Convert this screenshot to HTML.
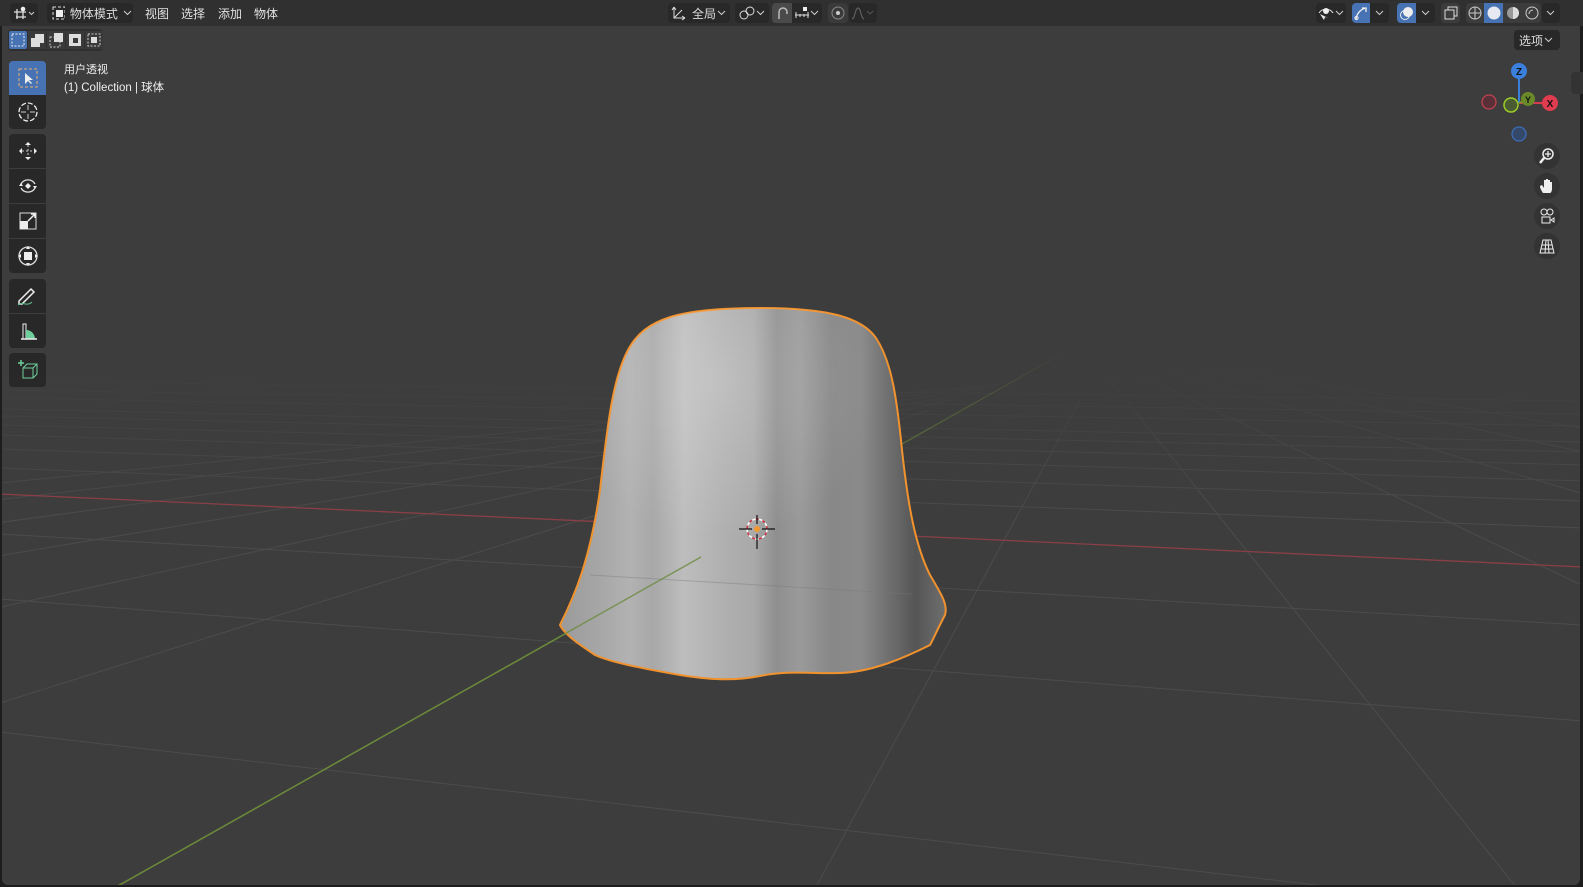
<!DOCTYPE html>
<html><head><meta charset="utf-8"><style>
*{margin:0;padding:0;box-sizing:border-box}
body{width:1583px;height:887px;background:#1d1d1d;font-family:"Liberation Sans","Noto Sans CJK SC",sans-serif;color:#ddd;overflow:hidden;position:relative;font-size:12px}
.top{position:absolute;left:0;top:0;width:1583px;height:26px;background:#303030}
.btn{position:absolute;top:3px;height:20px;background:#282828;border-radius:4px;display:flex;align-items:center;justify-content:center;color:#ddd;font-size:12px;white-space:nowrap}
.menu{position:absolute;top:5px;font-size:12px;color:#e0e0e0;white-space:nowrap}
.vp{position:absolute;left:2px;top:26px;width:1578px;height:859px;background:#3d3d3d;border-radius:0 0 6px 6px;overflow:hidden}
.tool{position:absolute;left:9px;width:37px;height:34px;background:#282828;display:flex;align-items:center;justify-content:center}
.blue{background:#4772b3}
.circ{position:absolute;width:26px;height:26px;border-radius:13px;background:#333;display:flex;align-items:center;justify-content:center}
</style></head><body>
<div class="top"></div>
<div class="btn" style="left:10px;width:28px"><svg width="24" height="14" viewBox="0 0 24 14"><path d="M2 6h12M4 11h10M5 3v10M11 3v10" stroke="#ddd" fill="none" stroke-width="1.3"/><circle cx="11" cy="3" r="2.3" fill="#eee"/><path d="M17 6l2.5 2.5L22 6" stroke="#ccc" fill="none"/></svg></div>
<div class="btn" style="left:47px;width:86px;justify-content:flex-start;padding-left:4px"><svg width="16" height="14"><rect x="2" y="1" width="12" height="12" fill="none" stroke="#ddd" stroke-dasharray="3 2"/><rect x="5" y="4" width="7" height="7" fill="#eee"/></svg><span style="margin-left:5px">物体模式</span><svg width="14" height="10" style="margin-left:3px"><path d="M3 3l3.5 3.5L10 3" stroke="#ccc" fill="none"/></svg></div>
<div class="menu" style="left:145px">视图</div>
<div class="menu" style="left:181px">选择</div>
<div class="menu" style="left:218px">添加</div>
<div class="menu" style="left:254px">物体</div>
<div class="btn" style="left:668px;width:62px"><svg width="18" height="16"><path d="M4 2v11h11M4 13l8-8M4 2l-2 3M4 2l2 3M15 13l-3-2M15 13l-3 2" stroke="#ddd" fill="none"/></svg><span style="margin-left:4px">全局</span><svg width="12" height="10"><path d="M2 3l3.5 3.5L9 3" stroke="#ccc" fill="none"/></svg></div>
<div class="btn" style="left:735px;width:34px"><svg width="18" height="16"><circle cx="6" cy="10" r="4" fill="none" stroke="#ddd"/><circle cx="12" cy="6" r="4" fill="none" stroke="#ddd"/></svg><svg width="10" height="10"><path d="M1 3l3.5 3.5L8 3" stroke="#ccc" fill="none"/></svg></div>
<div class="btn" style="left:772px;width:20px;background:#4a4a4a;border-radius:4px 0 0 4px"><svg width="16" height="16"><path d="M5 14V7a4 4 0 018 0v2" stroke="#bbb" fill="none" stroke-width="1.5"/></svg></div>
<div class="btn" style="left:792px;width:30px;border-radius:0 4px 4px 0"><svg width="16" height="14"><path d="M1 9h14M2 6v6M14 6v6M6 8v3M10 8v3" stroke="#ddd" fill="none"/><rect x="9" y="1" width="4" height="4" fill="#eee"/></svg><svg width="10" height="10"><path d="M1 3l3.5 3.5L8 3" stroke="#ccc" fill="none"/></svg></div>
<div class="btn" style="left:828px;width:20px;background:#3a3a3a"><svg width="16" height="16"><circle cx="8" cy="8" r="6" fill="none" stroke="#888"/><circle cx="8" cy="8" r="2" fill="#ccc"/></svg></div>
<div class="btn" style="left:849px;width:28px"><svg width="26" height="14"><path d="M2 13C5 13 5 2 8 2s3 11 6 11" stroke="#666" fill="none"/><path d="M17 5l3 3 3-3" stroke="#555" fill="none"/></svg></div>
<div class="btn" style="left:1316px;width:30px"><svg width="18" height="16"><path d="M2 8c3-5 11-5 14 0" stroke="#ddd" fill="none"/><circle cx="9" cy="6" r="3" fill="#eee"/><path d="M3 9l4 6 1-3 3 1z" fill="#eee"/></svg><svg width="10" height="10"><path d="M1 3l3.5 3.5L8 3" stroke="#ccc" fill="none"/></svg></div>
<div class="btn" style="left:1352px;width:18px;background:#4772b3;border-radius:4px 0 0 4px"><svg width="16" height="16"><path d="M3 14C4 8 8 4 13 3M9 3h4v4" stroke="#eee" fill="none" stroke-width="1.3"/><circle cx="3.5" cy="13" r="1.6" fill="none" stroke="#eee"/></svg></div>
<div class="btn" style="left:1370px;width:19px;border-radius:0 4px 4px 0"><svg width="10" height="10"><path d="M1 3l3.5 3.5L8 3" stroke="#ccc" fill="none"/></svg></div>
<div class="btn" style="left:1397px;width:19px;background:#4772b3;border-radius:4px 0 0 4px"><svg width="16" height="16"><circle cx="9" cy="7" r="5" fill="#eee"/><circle cx="6" cy="10" r="4.5" fill="none" stroke="#eee"/></svg></div>
<div class="btn" style="left:1416px;width:19px;border-radius:0 4px 4px 0"><svg width="10" height="10"><path d="M1 3l3.5 3.5L8 3" stroke="#ccc" fill="none"/></svg></div>
<div class="btn" style="left:1441px;width:19px;background:#3c3c3c"><svg width="16" height="16"><rect x="5" y="2" width="9" height="9" fill="none" stroke="#ddd"/><rect x="2" y="5" width="9" height="9" fill="#3c3c3c" stroke="#ddd"/></svg></div>
<div class="btn" style="left:1466px;width:18px;background:#3c3c3c;border-radius:4px 0 0 4px"><svg width="16" height="16"><circle cx="8" cy="8" r="6" fill="none" stroke="#ccc"/><path d="M2 8h12M8 2v12" stroke="#ccc"/></svg></div>
<div class="btn" style="left:1484px;width:19px;background:#4772b3;border-radius:0"><svg width="16" height="16"><circle cx="8" cy="8" r="6.5" fill="#e6e8f2"/></svg></div>
<div class="btn" style="left:1503px;width:19px;background:#3c3c3c;border-radius:0"><svg width="16" height="16"><circle cx="8" cy="8" r="6" fill="#999"/><path d="M8 2a6 6 0 010 12z" fill="#ddd"/></svg></div>
<div class="btn" style="left:1522px;width:19px;background:#3c3c3c;border-radius:0 4px 4px 0"><svg width="16" height="16"><circle cx="8" cy="8" r="6" fill="none" stroke="#ccc"/><path d="M5 9a4 4 0 014-4" stroke="#ccc" fill="none"/></svg></div>
<div class="btn" style="left:1542px;width:18px"><svg width="10" height="10"><path d="M1 3l3.5 3.5L8 3" stroke="#ccc" fill="none"/></svg></div>

<div class="vp">
<svg width="1578" height="859" viewBox="2 26 1578 859" style="position:absolute;left:0;top:0">
<defs>
<linearGradient id="fade" gradientUnits="userSpaceOnUse" x1="0" y1="350" x2="0" y2="520"><stop offset="0" stop-color="#fff" stop-opacity="0"/><stop offset="0.5" stop-color="#fff" stop-opacity="0.5"/><stop offset="1" stop-color="#fff" stop-opacity="1"/></linearGradient>
<mask id="m" maskUnits="userSpaceOnUse" x="0" y="0" width="1600" height="900"><rect x="0" y="0" width="1600" height="900" fill="url(#fade)"/></mask>
<linearGradient id="body" x1="560" y1="0" x2="947" y2="0" gradientUnits="userSpaceOnUse">
<stop offset="0" stop-color="#9a9a9a"/><stop offset="0.1" stop-color="#a6a6a6"/><stop offset="0.18" stop-color="#b2b2b2"/><stop offset="0.24" stop-color="#a8a8a8"/><stop offset="0.32" stop-color="#bdbdbd"/><stop offset="0.42" stop-color="#b0b0b0"/><stop offset="0.5" stop-color="#a9a9a9"/><stop offset="0.56" stop-color="#8f8f8f"/><stop offset="0.62" stop-color="#9a9a9a"/><stop offset="0.7" stop-color="#888"/><stop offset="0.78" stop-color="#8a8a8a"/><stop offset="0.85" stop-color="#6f6f6f"/><stop offset="0.92" stop-color="#555"/><stop offset="1" stop-color="#707070"/></linearGradient>
<radialGradient id="hl" cx="720" cy="380" r="160" gradientUnits="userSpaceOnUse"><stop offset="0" stop-color="#fff" stop-opacity="0.2"/><stop offset="1" stop-color="#fff" stop-opacity="0"/></radialGradient>
</defs>
<g stroke="#4c4c4c" stroke-width="1" mask="url(#m)">
<line x1="0" y1="381" x2="1583" y2="401"/><line x1="0" y1="390" x2="1583" y2="414"/><line x1="0" y1="398" x2="1583" y2="426"/><line x1="0" y1="409" x2="1583" y2="442"/><line x1="0" y1="416" x2="1583" y2="452"/><line x1="0" y1="425" x2="1583" y2="465"/><line x1="0" y1="435" x2="1583" y2="481"/><line x1="0" y1="449" x2="1583" y2="501"/><line x1="0" y1="468" x2="1583" y2="528"/>
<line x1="0" y1="534" x2="1583" y2="625"/><line x1="0" y1="599" x2="1583" y2="721"/><line x1="0" y1="732" x2="1583" y2="916"/>
<g>
<line x1="1010" y1="383" x2="-4084" y2="887"/><line x1="1000" y1="385" x2="-3384" y2="887"/><line x1="990" y1="388" x2="-2684" y2="887"/><line x1="980" y1="392" x2="-1984" y2="887"/><line x1="960" y1="398" x2="-1284" y2="887"/><line x1="930" y1="410" x2="-584" y2="887"/><line x1="1080" y1="400" x2="816" y2="887"/><line x1="1110" y1="380" x2="1516" y2="887"/><line x1="1140" y1="375" x2="2216" y2="887"/><line x1="1170" y1="372" x2="2916" y2="887"/><line x1="1200" y1="370" x2="3616" y2="887"/><line x1="1230" y1="369" x2="4316" y2="887"/>
</g>
</g>
<line x1="0" y1="494" x2="1583" y2="567" stroke="#8a3f47" stroke-width="1.3"/>
<line x1="1090" y1="338" x2="116" y2="887" stroke="#6b8a3a" stroke-width="1.4" mask="url(#m)"/>
<path d="M560 625 C575 595 590 560 600 490 C607 430 612 380 628 350 C645 318 680 308 760 308 C830 308 862 318 876 338 C892 362 897 400 902 450 C908 505 915 545 930 575 C942 595 948 605 945 615 C938 628 933 640 930 645 C900 660 870 672 840 673 C810 674 790 670 760 676 C735 681 710 680 680 675 C640 668 610 662 595 655 C580 645 565 635 560 625 Z" fill="url(#body)" stroke="#f0922e" stroke-width="2"/>
<path d="M560 625 C575 595 590 560 600 490 C607 430 612 380 628 350 C645 318 680 308 760 308 C830 308 862 318 876 338 C892 362 897 400 902 450 C908 505 915 545 930 575 C942 595 948 605 945 615 C938 628 933 640 930 645 C900 660 870 672 840 673 C810 674 790 670 760 676 C735 681 710 680 680 675 C640 668 610 662 595 655 C580 645 565 635 560 625 Z" fill="url(#hl)"/>
<line x1="116" y1="887" x2="701" y2="557" stroke="#6b8a3a" stroke-width="1.4" opacity="0.8"/>
<line x1="590" y1="575" x2="912" y2="594" stroke="#777" stroke-width="1" opacity="0.4"/>
<g>
<circle cx="757" cy="529" r="10" fill="none" stroke="#fff" stroke-width="1.5" stroke-dasharray="4 3"/>
<circle cx="757" cy="529" r="10" fill="none" stroke="#d03040" stroke-width="1.5" stroke-dasharray="3 4" stroke-dashoffset="3.5"/>
<path d="M757 515v9M757 534v15M739 529h13M762 529h13" stroke="#111" stroke-width="1.2"/>
<circle cx="757" cy="529" r="3" fill="#f29a30"/>
</g>
</svg>
</div>

<div style="position:absolute;left:8px;top:29px;width:95px;height:22px;background:#2f2f2f;border-radius:4px"></div>
<svg style="position:absolute;left:9px;top:31px" width="95" height="18">
<rect x="0" y="0" width="18" height="18" fill="#4772b3" rx="2"/><rect x="3" y="3" width="12" height="12" fill="none" stroke="#eee" stroke-dasharray="2 1.5"/>
<rect x="19" y="0" width="18" height="18" fill="#3a3a3a"/><rect x="22" y="7" width="9" height="9" fill="#ddd"/><rect x="26" y="3" width="9" height="9" fill="#ddd"/>
<rect x="38" y="0" width="18" height="18" fill="#3a3a3a"/><rect x="41" y="6" width="10" height="10" fill="none" stroke="#ccc" stroke-dasharray="2 1.5"/><rect x="45" y="2" width="9" height="9" fill="#ddd"/>
<rect x="57" y="0" width="18" height="18" fill="#3a3a3a"/><rect x="60" y="3" width="12" height="12" fill="#ddd"/><rect x="64" y="7" width="5" height="5" fill="#3a3a3a"/>
<rect x="76" y="0" width="18" height="18" fill="#3a3a3a"/><rect x="79" y="3" width="12" height="12" fill="none" stroke="#ccc" stroke-dasharray="2 1.5"/><rect x="82" y="6" width="6" height="6" fill="#ddd"/>
</svg>
<div style="position:absolute;left:64px;top:61px;font-size:11px;color:#eee;white-space:nowrap">用户透视</div>
<div style="position:absolute;left:64px;top:79px;font-size:11.5px;color:#eee;white-space:nowrap">(1) Collection | 球体</div>

<div class="tool blue" style="top:61px;border-radius:4px 4px 0 0"><svg width="24" height="24"><rect x="3" y="3" width="18" height="18" fill="none" stroke="#e9b070" stroke-dasharray="3 2"/><path d="M9 7v11l3-3 3 3 1-1-3-3h4z" fill="#eee"/></svg></div>
<div class="tool" style="top:95px;border-radius:0 0 4px 4px"><svg width="24" height="24"><circle cx="12" cy="12" r="9" fill="none" stroke="#eee" stroke-width="1.3" stroke-dasharray="5 2"/><path d="M12 5v5M12 14v5M5 12h5M14 12h5" stroke="#ccc"/></svg></div>
<div class="tool" style="top:134px;border-radius:4px 4px 0 0"><svg width="24" height="24"><path d="M12 3l-3 3h6zM12 21l-3-3h6zM3 12l3-3v6zM21 12l-3-3v6z" fill="#eee"/><path d="M12 6v12M6 12h12" stroke="#ccc" stroke-dasharray="2 2"/></svg></div>
<div class="tool" style="top:169px;border-radius:0"><svg width="24" height="24"><path d="M5 10a8 8 0 0114 0M19 14a8 8 0 01-14 0" fill="none" stroke="#ddd" stroke-width="1.3"/><path d="M12 9l3 3-3 3-3-3z" fill="#eee"/><path d="M3 12l2-3 2 3zM21 12l-2 3-2-3z" fill="#eee"/></svg></div>
<div class="tool" style="top:204px;border-radius:0"><svg width="24" height="24"><rect x="4" y="4" width="16" height="16" fill="none" stroke="#ddd"/><rect x="4" y="12" width="8" height="8" fill="#eee"/><path d="M12 12l7-7M15 5h4v4" stroke="#eee" fill="none" stroke-width="1.5"/></svg></div>
<div class="tool" style="top:239px;border-radius:0 0 4px 4px"><svg width="24" height="24"><circle cx="12" cy="12" r="9" fill="none" stroke="#ddd" stroke-width="1.3"/><rect x="8" y="8" width="8" height="8" fill="#eee"/><path d="M12 2l-2 3h4zM12 22l-2-3h4zM2 12l3-2v4zM22 12l-3-2v4z" fill="#eee"/></svg></div>
<div class="tool" style="top:279px;border-radius:4px 4px 0 0"><svg width="26" height="24"><path d="M4 17l12-12 3 3-12 12H4z" fill="none" stroke="#eee" stroke-width="1.5"/><path d="M3 21c5-4 9 2 14-3" stroke="#5fbf8c" fill="none"/></svg></div>
<div class="tool" style="top:314px;border-radius:0 0 4px 4px"><svg width="24" height="24"><path d="M7 20V5h3v15" fill="none" stroke="#eee"/><path d="M10 11a9 9 0 019 9h-9z" fill="#6fcf9c"/><path d="M5 20h16" stroke="#eee" stroke-width="1.5"/></svg></div>
<div class="tool" style="top:353px;border-radius:4px"><svg width="26" height="24"><path d="M6 2v6M3 5h6" stroke="#6fcf9c" stroke-width="1.5"/><path d="M8 10h10v10H8zM8 10l4-4h10v10l-4 4M18 10l4-4" fill="none" stroke="#6fcf9c"/></svg></div>

<div class="btn" style="left:1514px;top:30px;width:46px;height:20px">选项<svg width="12" height="10"><path d="M2 3l3.5 3.5L9 3" stroke="#ccc" fill="none"/></svg></div>
<div style="position:absolute;left:1571px;top:72px;width:12px;height:22px;background:#333;border-radius:4px 0 0 4px"></div>

<svg style="position:absolute;left:1476px;top:58px" width="90" height="90">
<line x1="43" y1="13" x2="43" y2="45" stroke="#3a7fd8" stroke-width="2"/>
<line x1="43" y1="45" x2="74" y2="45" stroke="#d83a4e" stroke-width="2"/>
<line x1="43" y1="45" x2="52" y2="41" stroke="#7a9a2a" stroke-width="2"/>
<circle cx="13" cy="44" r="7" fill="#5a3038" stroke="#c04050" stroke-width="1.3"/>
<circle cx="43" cy="76" r="7" fill="#34486a" stroke="#3a6cb8" stroke-width="1.3"/>
<circle cx="52" cy="41" r="7" fill="#6a8a2a"/>
<circle cx="35" cy="47" r="7" fill="#4c5c32" stroke="#9acd2a" stroke-width="1.5"/>
<circle cx="43" cy="13" r="8" fill="#3a80dc"/>
<circle cx="74" cy="45" r="8" fill="#e03c50"/>
<text x="43" y="17" font-size="10" font-weight="bold" text-anchor="middle" fill="#111" font-family="Liberation Sans">Z</text>
<text x="74" y="49" font-size="10" font-weight="bold" text-anchor="middle" fill="#111" font-family="Liberation Sans">X</text>
<text x="52" y="45" font-size="9" font-weight="bold" text-anchor="middle" fill="#111" font-family="Liberation Sans">Y</text>
</svg>
<div class="circ" style="left:1534px;top:143px"><svg width="18" height="18"><circle cx="10" cy="7" r="5" fill="none" stroke="#eee" stroke-width="1.5"/><path d="M6 11l-4 5" stroke="#eee" stroke-width="2.5"/><path d="M10 4v6M7 7h6" stroke="#eee" stroke-width="1.3"/></svg></div>
<div class="circ" style="left:1534px;top:173px"><svg width="18" height="18"><path d="M5 16c-2-3-3-5-3-7l2-1 2 3V3h2v6V2h2v7V3h2v7V5h2v7c0 2-1 4-2 4z" fill="#eee"/></svg></div>
<div class="circ" style="left:1534px;top:203px"><svg width="18" height="18"><circle cx="6" cy="5" r="3" fill="none" stroke="#eee"/><circle cx="12" cy="5" r="3" fill="none" stroke="#eee"/><rect x="4" y="10" width="8" height="6" fill="none" stroke="#eee"/><path d="M13 13l3-2v4z" fill="none" stroke="#eee"/></svg></div>
<div class="circ" style="left:1534px;top:233px"><svg width="18" height="18"><path d="M5 3h8l3 13H2z M4 8h10M3 12h12M8 3l-1 13M10 3l1 13" fill="none" stroke="#eee"/></svg></div>
</body></html>
